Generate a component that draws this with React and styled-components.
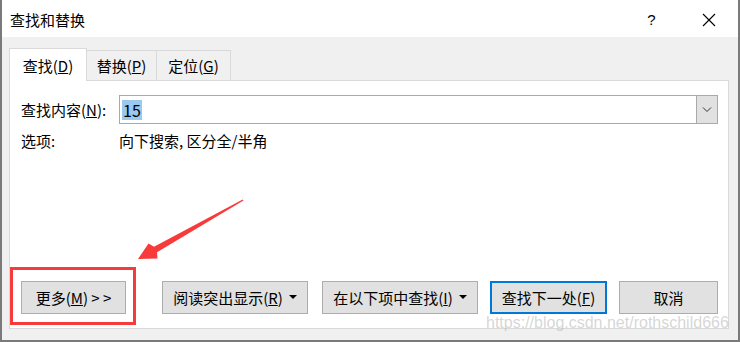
import React from 'react'
import styled, { createGlobalStyle } from 'styled-components'

const colors = {
  frame: '#7a7a7a',
  dialogBg: '#f0f0f0',
  tabBorder: '#d9d9d9',
  inputBorder: '#a9a9a9',
  btnBg: '#e1e1e1',
  btnBorder: '#adadad',
  accent: '#0078d7',
  select: '#99c9ef',
  red: '#f73b3b'
}

const GlobalStyle = createGlobalStyle`
  html, body {
    margin: 0;
    padding: 0;
    background: #fff;
  }
  body {
    font-family: "Noto Sans CJK SC", "Noto Sans", sans-serif;
    font-size: 15px;
    color: #000;
  }
`

const Stage = styled.div`
  position: relative;
  width: 740px;
  height: 342px;
  overflow: hidden;
`

const Window = styled.div`
  width: 740px;
  height: 342px;
  box-sizing: border-box;
  background: ${colors.dialogBg};
  border: 2px solid ${colors.frame};
  border-top: none;
  display: flex;
  flex-direction: column;
`

const TitleBar = styled.div`
  height: 37px;
  flex: 0 0 37px;
  background: #fff;
  display: flex;
  align-items: center;
  padding: 2px 1px 0 8px;
  box-sizing: border-box;
`

const Title = styled.div`
  line-height: 20px;
  flex: 1;
`

const TitleButton = styled.div`
  width: 57px;
  height: 34px;
  display: flex;
  align-items: center;
  justify-content: center;
  font-family: "Liberation Sans", sans-serif;
  font-size: 15px;
`

const Body = styled.div`
  flex: 1;
  display: flex;
  flex-direction: column;
  padding: 11px 9px 11px 7px;
`

const TabRow = styled.div`
  display: flex;
  align-items: flex-end;
  height: 32px;
`

const Tab = styled.div`
  position: relative;
  z-index: ${p => (p.$active ? 1 : 0)};
  width: ${p => p.$w}px;
  height: ${p => (p.$active ? 33 : 30)}px;
  margin-bottom: ${p => (p.$active ? -1 : 0)}px;
  margin-left: ${p => (p.$first ? 0 : -1)}px;
  box-sizing: border-box;
  border: 1px solid ${colors.tabBorder};
  border-bottom: none;
  background: ${p => (p.$active ? '#fff' : colors.dialogBg)};
  text-align: center;
  padding-top: ${p => (p.$active ? 7 : 5)}px;
  line-height: 20px;
`

const Panel = styled.div`
  flex: 1;
  background: #fff;
  border: 1px solid ${colors.tabBorder};
  display: flex;
  flex-direction: column;
  padding: 14px 10px 14px 11px;
`

const Row = styled.div`
  display: flex;
  align-items: center;
  height: ${p => p.$h}px;
  margin-top: ${p => p.$mt || 0}px;
  line-height: 20px;
`

const Label = styled.div`
  width: 98px;
  flex: 0 0 98px;
`

const Combo = styled.div`
  flex: 1;
  height: 29px;
  box-sizing: border-box;
  border: 1px solid ${colors.inputBorder};
  display: flex;
  align-items: stretch;
`

const ComboText = styled.div`
  flex: 1;
  display: flex;
  align-items: center;
  padding-left: 2px;
`

const Selected = styled.span`
  background: ${colors.select};
  font-size: 16px;
  line-height: 20px;
  padding: 0 1px;
`

const ComboButton = styled.div`
  width: 20px;
  background: ${colors.btnBg};
  border-left: 1px solid ${colors.inputBorder};
  display: flex;
  align-items: center;
  justify-content: center;
`

const ButtonRow = styled.div`
  display: flex;
  align-items: center;
  margin-top: auto;
`

const Button = styled.div`
  width: ${p => p.$w}px;
  height: 33px;
  margin-left: ${p => p.$ml || 0}px;
  box-sizing: border-box;
  background: ${colors.btnBg};
  border: ${p => (p.$default ? `2px solid ${colors.accent}` : `1px solid ${colors.btnBorder}`)};
  display: flex;
  align-items: center;
  justify-content: center;
  gap: 6px;
  line-height: 20px;
  white-space: nowrap;
`

const Caret = styled.span`
  width: 0;
  height: 0;
  border-left: 4px solid transparent;
  border-right: 4px solid transparent;
  border-top: 4px solid #000;
  margin-top: -2px;
`

const RedBox = styled.div`
  position: absolute;
  left: 10px;
  top: 267px;
  width: 126px;
  height: 58px;
  box-sizing: border-box;
  border: 3px solid ${colors.red};
`

const ArrowSvg = styled.svg`
  position: absolute;
  left: 0;
  top: 0;
`

const Watermark = styled.div`
  position: absolute;
  left: 486px;
  top: 313px;
  font-family: "Liberation Sans", Arial, sans-serif;
  font-size: 16px;
  line-height: 20px;
  color: rgba(180, 180, 180, 0.55);
  white-space: nowrap;
`

const Chevron = () => (
  <svg width="10" height="6" viewBox="0 0 10 6">
    <path d="M1 0.5 L5 4.5 L9 0.5" fill="none" stroke="#333" strokeWidth="1" />
  </svg>
)

const CloseIcon = () => (
  <svg width="14" height="14" viewBox="0 0 14 14">
    <path d="M1 1 L13 13 M13 1 L1 13" stroke="#000" strokeWidth="1.1" />
  </svg>
)

export default function App() {
  return (
    <Stage>
      <GlobalStyle />
      <Window>
        <TitleBar>
          <Title>查找和替换</Title>
          <TitleButton>?</TitleButton>
          <TitleButton><CloseIcon /></TitleButton>
        </TitleBar>
        <Body>
          <TabRow>
            <Tab $active $first $w={78}>查找(<u>D</u>)</Tab>
            <Tab $w={71}>替换(<u>P</u>)</Tab>
            <Tab $w={75}>定位(<u>G</u>)</Tab>
          </TabRow>
          <Panel>
            <Row $h={29}>
              <Label>查找内容(<u>N</u>):</Label>
              <Combo>
                <ComboText><Selected>15</Selected></ComboText>
                <ComboButton><Chevron /></ComboButton>
              </Combo>
            </Row>
            <Row $h={20} $mt={7}>
              <Label>选项:</Label>
              <div>向下搜索, 区分全/半角</div>
            </Row>
            <ButtonRow>
              <Button $w={105}><span>更多(<u>M</u>) &gt; &gt;</span></Button>
              <Button $w={146} $ml={36}><span>阅读突出显示(<u>R</u>)</span><Caret /></Button>
              <Button $w={156} $ml={14}><span>在以下项中查找(<u>I</u>)</span><Caret /></Button>
              <Button $w={117} $ml={12} $default><span>查找下一处(<u>F</u>)</span></Button>
              <Button $w={99} $ml={12}><span>取消</span></Button>
            </ButtonRow>
          </Panel>
        </Body>
      </Window>
      <RedBox />
      <ArrowSvg width="740" height="342" viewBox="0 0 740 342">
        <polygon
          points="243.5,200.6 157,252.2 157.5,258.5 138,259 148.5,243.5 154,246.8 242.7,199.4"
          fill={colors.red}
        />
      </ArrowSvg>
      <Watermark>https://blog.csdn.net/rothschild666</Watermark>
    </Stage>
  )
}
